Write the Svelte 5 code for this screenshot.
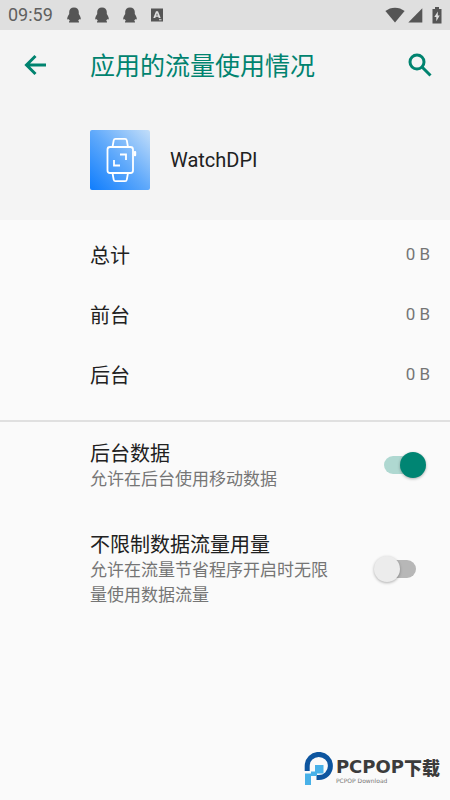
<script lang="ts">
  type Usage = {
    label: string;
    value: string;
  };

  const usage: Usage[] = [
    { label: "总计", value: "0 B" },
    { label: "前台", value: "0 B" },
    { label: "后台", value: "0 B" },
  ];

  let settings = $state([
    {
      id: "background-data",
      title: "后台数据",
      summary: "允许在后台使用移动数据",
      checked: true,
    },
    {
      id: "unrestricted-data",
      title: "不限制数据流量用量",
      summary: "允许在流量节省程序开启时无限量使用数据流量",
      checked: false,
    },
  ]);
</script>

<div class="screen">
  <div class="status-bar">
    <span class="clock">09:59</span>
    <div class="notifications">
      {#each [1, 2, 3] as n (n)}
        <svg class="penguin" viewBox="0 0 14 16" aria-hidden="true">
          <path d="M7 0.5C4 .5 2.2 2.5 2.2 5v2C1.4 8.3 0.2 10 0.2 11.8c0 1.1.8 1 1.6.2.2.9.6 1.3 1.1 1.8-.7.3-.9.7-.9 1.7h10c0-1-.2-1.4-.9-1.7.5-.5.9-.9 1.1-1.8.8.8 1.6.9 1.6-.2 0-1.8-1.2-3.5-2-4.8V5C11.8 2.5 10 .5 7 .5z" />
        </svg>
      {/each}
      <svg class="input-method" viewBox="0 0 12 14" aria-hidden="true">
        <path fill-rule="evenodd" d="M0 0.5h12v13H0zM5 3.2L2.3 10h2l.4-1.2h2.6L7.7 10h2L7 3.2zM6 5l.8 2.4H5.2zM8 11.3h2.5v1H8z" />
      </svg>
    </div>
    <div class="system">
      <svg width="20" height="16" viewBox="0 0 20 16" aria-hidden="true">
        <path d="M10 15.5L0.4 4.1C3.2 1.8 6.4.7 10 .7s6.8 1.1 9.6 3.4z" />
      </svg>
      <svg width="15" height="16" viewBox="0 0 15 16" aria-hidden="true">
        <path d="M14.3 1.2v14.3H.3z" />
      </svg>
      <svg class="battery" width="10" height="17" viewBox="0 0 10 17" aria-hidden="true">
        <path fill-rule="evenodd" d="M3 0h4v2h2.5v14.5H.5V2H3zM5.8 4.5L2.3 10h2v4.2l3.4-5.7H5.8z" />
      </svg>
    </div>
  </div>

  <header class="toolbar">
    <button type="button" aria-label="返回">
      <svg width="24" height="22" viewBox="0 0 24 22" aria-hidden="true">
        <path d="M11.5 2L2.5 11l9 9M2.5 11H22" />
      </svg>
    </button>
    <h1>应用的流量使用情况</h1>
    <button type="button" aria-label="搜索">
      <svg width="24" height="24" viewBox="0 0 24 24" aria-hidden="true">
        <circle cx="9" cy="9" r="7" />
        <path d="M14 14l8.5 8.5" />
      </svg>
    </button>
  </header>

  <section class="app">
    <svg class="app-icon" viewBox="0 0 60 60" aria-hidden="true">
      <defs>
        <linearGradient id="tile" x1="0" y1="1" x2="1" y2="0">
          <stop offset="0" stop-color="#0f7dfd" />
          <stop offset="0.5" stop-color="#5fa9fb" />
          <stop offset="1" stop-color="#c3def9" />
        </linearGradient>
      </defs>
      <rect width="60" height="60" rx="2" fill="url(#tile)" />
      <g fill="none" stroke="#fff" stroke-width="1.8" stroke-linejoin="round">
        <rect x="17.5" y="17" width="25.5" height="26" rx="2.5" />
        <path d="M22.5 17l1.2-6.6Q24 8.8 25.5 8.8h9.5q1.5 0 1.8 1.6L38 17" />
        <path d="M22.5 43l1.2 6.6q.3 1.6 1.8 1.6H35q1.5 0 1.8-1.6L38 43" />
        <path d="M30 24.5H36V30M24 30V35.5h6" stroke-linejoin="miter" />
      </g>
      <rect x="43.8" y="21" width="2.4" height="5.2" rx="1" fill="#fff" />
    </svg>
    <span>WatchDPI</span>
  </section>

  <dl class="usage">
    {#each usage as item (item.label)}
      <div class="usage-row">
        <dt>{item.label}</dt>
        <dd>{item.value}</dd>
      </div>
    {/each}
  </dl>

  <section class="settings">
    {#each settings as setting (setting.id)}
      <label class="setting" for={setting.id}>
        <span class="text">
          <span class="title">{setting.title}</span>
          <span class="summary">{setting.summary}</span>
        </span>
        <input id={setting.id} type="checkbox" role="switch" bind:checked={setting.checked} />
      </label>
    {/each}
  </section>

  <div class="brand">
    <svg width="30" height="34" viewBox="0 0 30 34" aria-hidden="true">
      <path d="M3.2 19V14A11.6 11.6 0 1 1 14.8 25.6H12.5" fill="none" stroke="#0d559f" stroke-width="5" />
      <path d="M11 13h8.5v8.5H11zM1 21.5h6V33H1z" fill="#48b1e8" />
      <path d="M7 19.5h6V24H7z" fill="#48b1e8" />
    </svg>
    <div class="brand-text">
      <strong>PCPOP<b>下载</b></strong>
      <small>PCPOP Download</small>
    </div>
  </div>
</div>

<style>
  :global(body) {
    margin: 0;
    background: #fafafa;
  }

  .screen {
    position: relative;
    min-height: 100vh;
    font-family: Roboto, "Noto Sans CJK SC", sans-serif;
    font-size: 20px;
    color: #212121;
    background: #fafafa;
  }

  .status-bar {
    display: flex;
    align-items: center;
    height: 30px;
    box-sizing: border-box;
    padding: 0 8px;
    background: #dfdfdf;
    color: #606060;
  }

  .status-bar svg {
    display: block;
    fill: #555;
  }

  .clock {
    font-size: 18px;
    line-height: 30px;
  }

  .notifications {
    display: flex;
    align-items: center;
    gap: 14px;
    margin-left: 14px;
  }

  .penguin {
    width: 14px;
    height: 16px;
  }

  .input-method {
    width: 12px;
    height: 14px;
  }

  .system {
    display: flex;
    align-items: center;
    gap: 3px;
    margin-left: auto;
  }

  .system .battery {
    margin-left: 6px;
  }

  .toolbar {
    display: flex;
    align-items: center;
    height: 70px;
    padding: 0 18px 0 24px;
    background: #f4f4f4;
    color: #00836f;
  }

  .toolbar button {
    padding: 0;
    border: none;
    background: none;
    color: inherit;
    cursor: pointer;
  }

  .toolbar svg {
    display: block;
    fill: none;
    stroke: currentColor;
    stroke-width: 3;
  }

  h1 {
    flex: 1;
    margin: 0;
    padding: 4px 0 0 42px;
    font-size: 25px;
    font-weight: 400;
    line-height: 36px;
  }

  .app {
    display: flex;
    align-items: center;
    gap: 20px;
    height: 120px;
    padding: 0 20px 0 90px;
    background: #f4f4f4;
  }

  .app-icon {
    width: 60px;
    height: 60px;
  }

  .usage {
    margin: 0;
    padding: 4px 20px 16px 90px;
    border-bottom: 2px solid #e0e0e0;
  }

  .usage-row {
    display: flex;
    align-items: center;
    justify-content: space-between;
    height: 60px;
  }

  dd {
    margin: 0;
    font-size: 17px;
    color: #757575;
  }

  .settings {
    padding: 16px 24px 0 90px;
  }

  .setting {
    display: flex;
    align-items: center;
    justify-content: space-between;
    margin-bottom: 37px;
    cursor: pointer;
  }

  .text {
    flex: 1;
    max-width: 250px;
    padding-top: 3px;
  }

  .title,
  .summary {
    display: block;
  }

  .title {
    line-height: 26px;
  }

  .summary {
    font-size: 17px;
    line-height: 25px;
    color: #757575;
  }

  input {
    position: relative;
    appearance: none;
    width: 32px;
    height: 18px;
    margin: 0 10px 0 0;
    border-radius: 9px;
    background: #b7b7b7;
    cursor: pointer;
  }

  input::before {
    content: "";
    position: absolute;
    top: -4px;
    left: -10px;
    width: 26px;
    height: 26px;
    border-radius: 50%;
    background: #ececec;
    box-shadow: 0 1px 3px rgba(0, 0, 0, 0.3);
  }

  input:checked {
    background: #afd8d1;
  }

  input:checked::before {
    left: 16px;
    background: #008573;
  }

  .brand {
    position: absolute;
    right: 10px;
    bottom: 14px;
    display: flex;
    align-items: center;
    gap: 2px;
  }

  .brand-text {
    display: flex;
    flex-direction: column;
    padding-top: 4px;
  }

  strong {
    display: flex;
    align-items: center;
    font-family: "DejaVu Sans", sans-serif;
    font-size: 18px;
    line-height: 20px;
    color: #3c3c3c;
  }

  b {
    font-family: "Noto Sans CJK SC", sans-serif;
    font-size: 18px;
    font-weight: 900;
  }

  small {
    font-family: "DejaVu Sans", sans-serif;
    font-size: 6px;
    line-height: 8px;
    color: #777;
  }
</style>
